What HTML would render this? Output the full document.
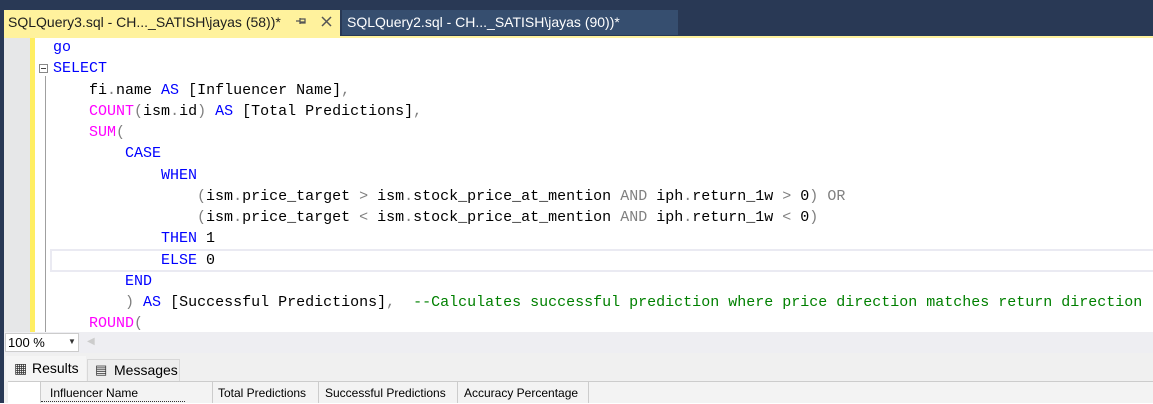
<!DOCTYPE html><html><head><style>
body{margin:0;width:1153px;height:403px;overflow:hidden;background:#fff;font-family:"Liberation Sans",sans-serif;position:relative}
.a{position:absolute}
.code{position:absolute;left:53px;top:37px;font-family:"Liberation Mono",monospace;font-size:15px;line-height:21.25px;white-space:pre;color:#000}
.k{color:#0000ff}.f{color:#ff00ff}.g{color:#808080}.c{color:#008000}
</style></head><body>
<div class="a" style="left:0;top:0;width:1153px;height:403px;background:#293955"></div>
<div class="a" style="left:4px;top:10px;width:336px;height:26px;background:#fff29d"></div>
<div class="a" style="left:8px;top:14px;font-size:14px;color:#1e1e1e">SQLQuery3.sql - CH..._SATISH\jayas (58))*</div>
<svg class="a" style="left:295px;top:15px" width="12" height="12" viewBox="0 0 12 12"><path d="M1 6H5M5 3V9M5 4H10V8H5M5 7H10" stroke="#555" stroke-width="1.3" fill="none"/></svg>
<svg class="a" style="left:321px;top:16px" width="11" height="11" viewBox="0 0 11 11"><path d="M1 1L10 10M10 1L1 10" stroke="#555" stroke-width="1.5"/></svg>
<div class="a" style="left:342px;top:10px;width:336px;height:25px;background:#364e6f"></div>
<div class="a" style="left:347px;top:14px;font-size:14px;color:#fff">SQLQuery2.sql - CH..._SATISH\jayas (90))*</div>
<div class="a" style="left:4px;top:36px;width:1149px;height:2px;background:#fff29d"></div>
<div class="a" style="left:4px;top:38px;width:1149px;height:294px;background:#fff"></div>
<div class="a" style="left:4px;top:38px;width:26px;height:294px;background:#e6e7e8"></div>
<div class="a" style="left:30px;top:38px;width:5px;height:294px;background:#ffee62"></div>
<div class="a" style="left:45px;top:76px;width:1px;height:256px;background:#a0a0a0"></div>
<div class="a" style="left:39px;top:64px;width:9px;height:9px;border:1px solid #888;background:#fff;box-sizing:border-box"></div>
<div class="a" style="left:41px;top:68px;width:5px;height:1px;background:#444"></div>
<div class="a" style="left:50px;top:249px;width:1103px;height:19px;border:2px solid #eaeaf2;border-right:none"></div>
<div class="code"><span class="k">go</span>
<span class="k">SELECT</span>
    fi<span class="g">.</span>name <span class="k">AS</span> [Influencer Name]<span class="g">,</span>
    <span class="f">COUNT</span><span class="g">(</span>ism<span class="g">.</span>id<span class="g">)</span> <span class="k">AS</span> [Total Predictions]<span class="g">,</span>
    <span class="f">SUM</span><span class="g">(</span>
        <span class="k">CASE</span>
            <span class="k">WHEN</span>
                <span class="g">(</span>ism<span class="g">.</span>price_target <span class="g">&gt;</span> ism<span class="g">.</span>stock_price_at_mention <span class="g">AND</span> iph<span class="g">.</span>return_1w <span class="g">&gt;</span> 0<span class="g">)</span> <span class="g">OR</span>
                <span class="g">(</span>ism<span class="g">.</span>price_target <span class="g">&lt;</span> ism<span class="g">.</span>stock_price_at_mention <span class="g">AND</span> iph<span class="g">.</span>return_1w <span class="g">&lt;</span> 0<span class="g">)</span>
            <span class="k">THEN</span> 1
            <span class="k">ELSE</span> 0
        <span class="k">END</span>
        <span class="g">)</span> <span class="k">AS</span> [Successful Predictions]<span class="g">,</span>  <span class="c">--Calculates successful prediction where price direction matches return direction</span>
    <span class="f">ROUND</span><span class="g">(</span></div>
<div class="a" style="left:4px;top:332px;width:1149px;height:21px;background:#eeeef2"></div>
<div class="a" style="left:5px;top:333px;width:74px;height:19px;background:#fff;border:1px solid #ccc;box-sizing:border-box"></div>
<div class="a" style="left:8px;top:335px;font-size:13px;color:#000">100 %</div>
<div class="a" style="left:68px;top:337px;font-size:8px;color:#333">▼</div>
<div class="a" style="left:87px;top:336px;font-size:10px;color:#ccc">◀</div>
<div class="a" style="left:4px;top:353px;width:1149px;height:50px;background:#f0f0f0"></div>
<div class="a" style="left:6px;top:356px;width:80px;height:25px;background:#f5f5f5"></div>
<div class="a" style="left:14px;top:360px;font-size:14px;color:#333">▦</div>
<div class="a" style="left:32px;top:360px;font-size:14px;color:#000">Results</div>
<div class="a" style="left:87px;top:359px;width:93px;height:22px;background:#eeeeee;border:1px solid #d8d8d8;border-bottom:none;box-sizing:border-box"></div>
<div class="a" style="left:95px;top:362px;font-size:13px;color:#333">▤</div>
<div class="a" style="left:114px;top:362px;font-size:14px;color:#000">Messages</div>
<div class="a" style="left:8px;top:381px;width:1145px;height:22px;background:#fff;border-top:1px solid #ccc"></div>
<div class="a" style="left:40px;top:382px;width:1113px;height:21px;background:#f3f3f3"></div>
<div class="a" style="left:40px;top:382px;width:1px;height:21px;background:#ccc"></div>
<div class="a" style="left:212px;top:382px;width:1px;height:21px;background:#ccc"></div>
<div class="a" style="left:318px;top:382px;width:1px;height:21px;background:#ccc"></div>
<div class="a" style="left:457px;top:382px;width:1px;height:21px;background:#ccc"></div>
<div class="a" style="left:588px;top:382px;width:1px;height:21px;background:#ccc"></div>
<div class="a" style="left:50px;top:386px;font-size:12px;color:#000">Influencer Name</div>
<div class="a" style="left:218px;top:386px;font-size:12px;color:#000">Total Predictions</div>
<div class="a" style="left:325px;top:386px;font-size:12px;color:#000">Successful Predictions</div>
<div class="a" style="left:464px;top:386px;font-size:12px;color:#000">Accuracy Percentage</div>
<div class="a" style="left:41px;top:401px;width:144px;border-top:1px dotted #333"></div>
</body></html>
